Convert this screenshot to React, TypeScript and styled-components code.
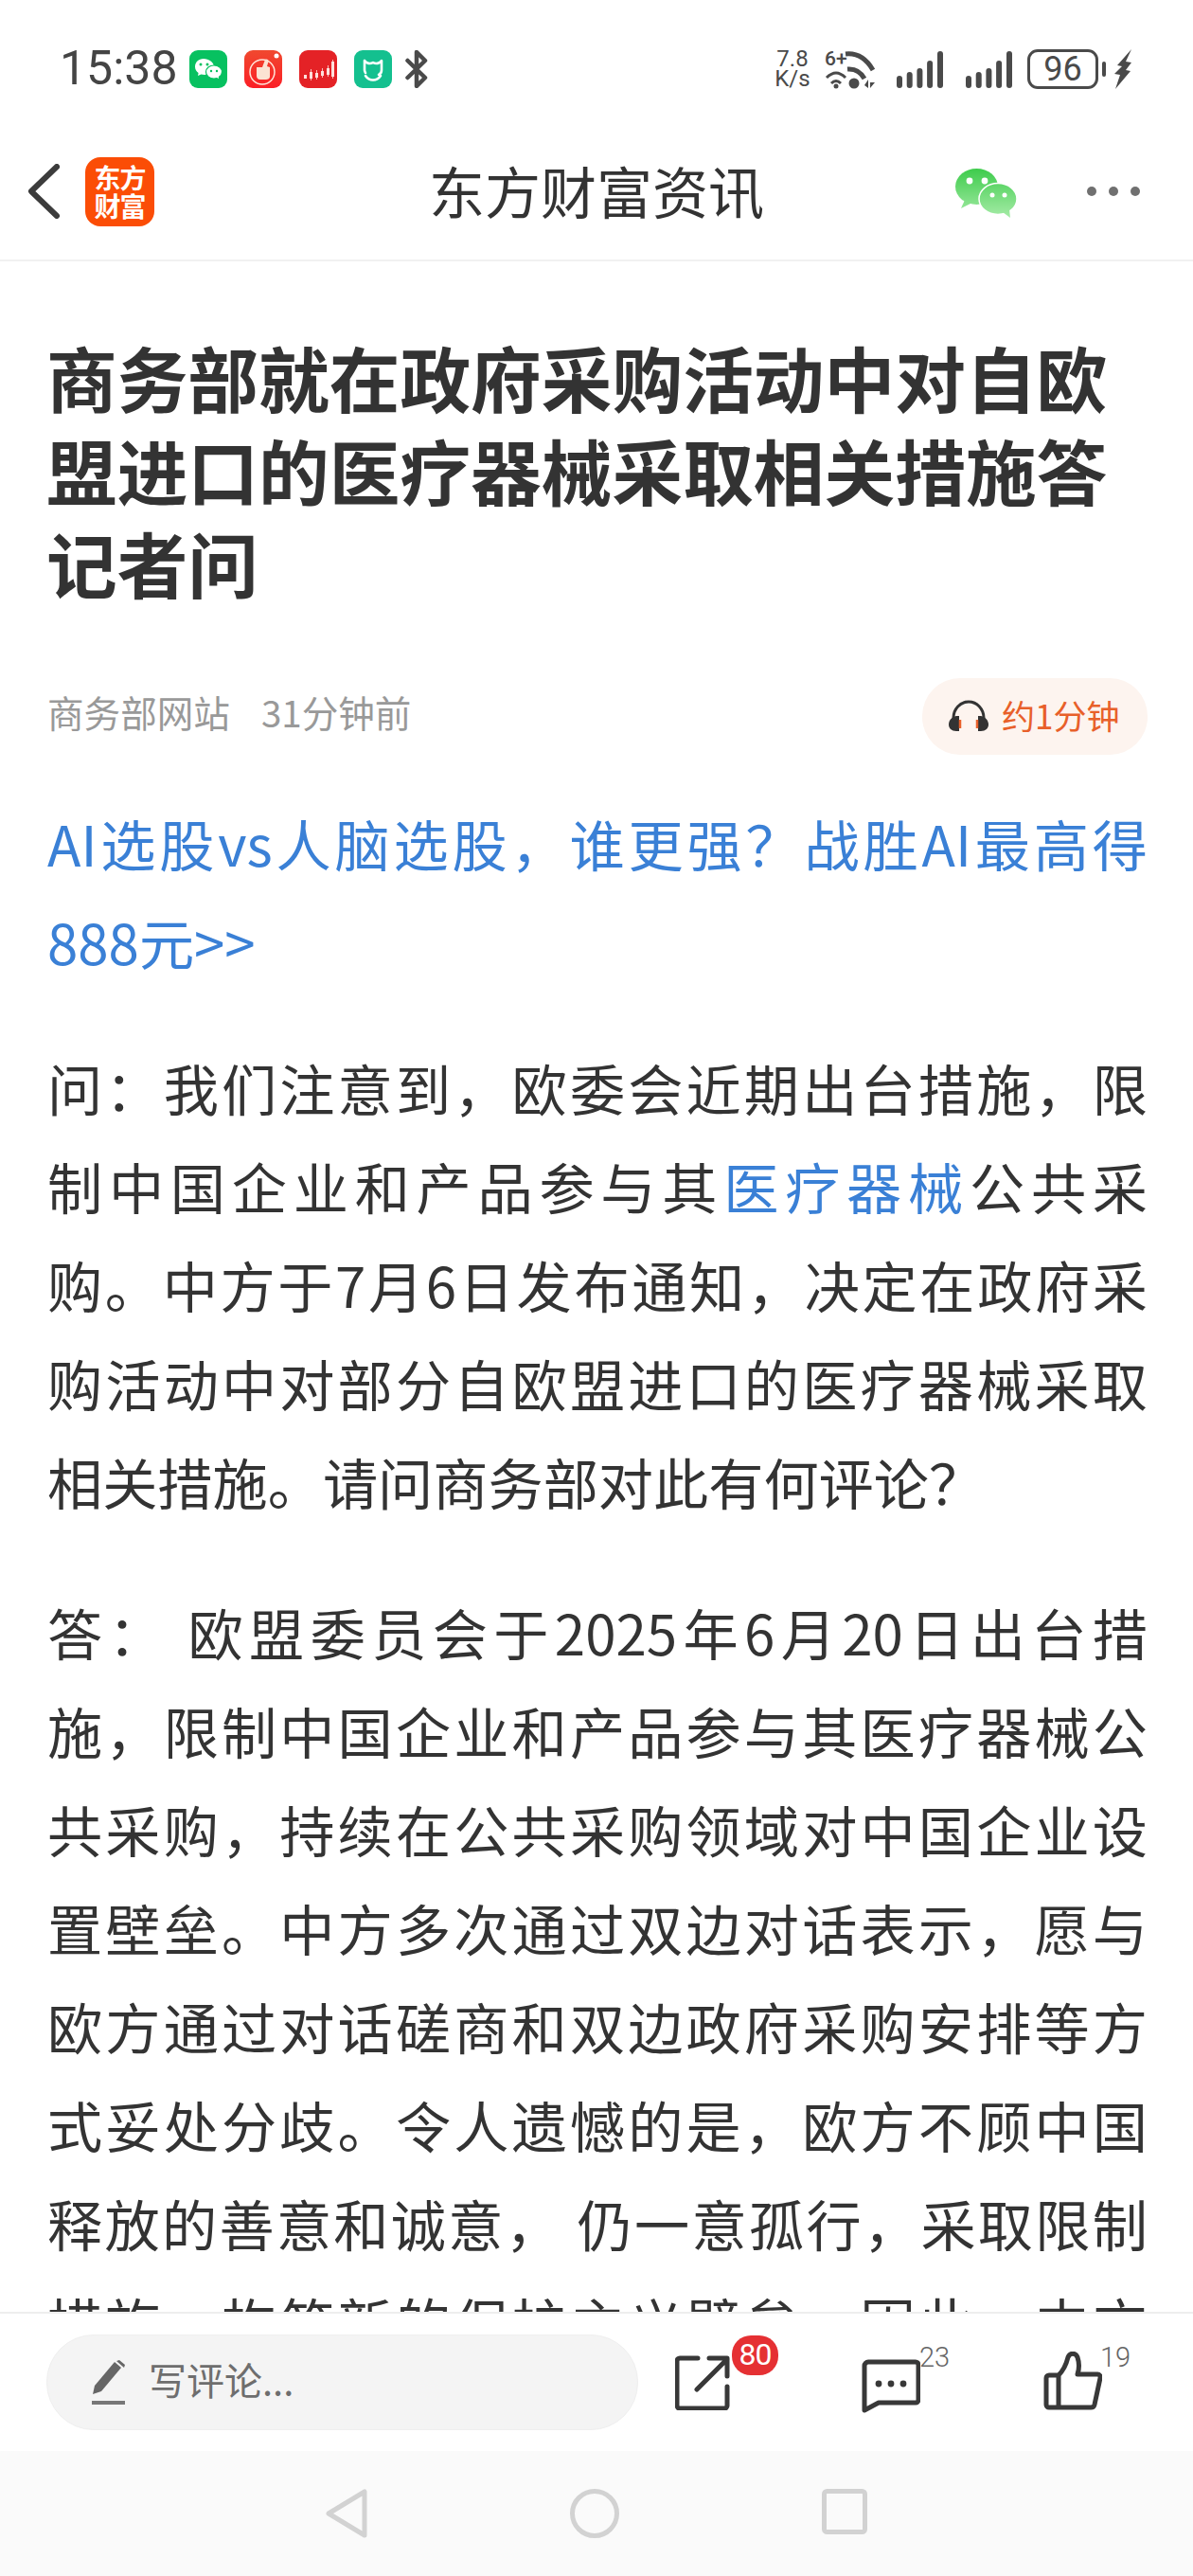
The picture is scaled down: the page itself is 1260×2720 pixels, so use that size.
import styled, { createGlobalStyle } from "styled-components";

const GlobalStyle = createGlobalStyle`
  html, body {
    margin: 0;
    padding: 0;
    background: #fff;
  }
  * {
    box-sizing: border-box;
  }
`;

const Page = styled.div`
  width: 1260px;
  height: 2720px;
  display: flex;
  flex-direction: column;
  overflow: hidden;
  background: #fff;
  font-family: "Noto Sans CJK SC", "Liberation Sans", sans-serif;
`;

const StatusBar = styled.div`
  height: 130px;
  flex: none;
  padding: 52px 64px 0 63px;
  display: flex;
  justify-content: space-between;
  align-items: flex-start;
`;

const StatusGroup = styled.div`
  display: flex;
  align-items: center;
  height: 41px;
`;

const Clock = styled.span`
  font-family: Roboto, "Liberation Sans", sans-serif;
  font-size: 50px;
  line-height: 41px;
  color: #444;
  width: 137px;
`;

const AppTile = styled.div<{ $bg: string; $gap?: number }>`
  width: 40px;
  height: 40px;
  border-radius: 9px;
  background: ${(p) => p.$bg};
  margin-right: ${(p) => p.$gap ?? 18}px;
  overflow: hidden;
  svg {
    display: block;
  }
`;

const NetSpeed = styled.div`
  font-family: Roboto, "Liberation Sans", sans-serif;
  font-size: 24px;
  line-height: 21px;
  width: 40px;
  color: #4a4a4a;
  text-align: center;
  margin-right: 14px;
`;

const WifiIcon = styled.svg`
  margin-right: 20px;
`;

const BarGap = styled.div<{ $width: number }>`
  width: ${(p) => p.$width}px;
`;

const Battery = styled.div`
  width: 75px;
  height: 42px;
  border: 3px solid #4a4a4a;
  border-radius: 11px;
  font-family: Roboto, "Liberation Sans", sans-serif;
  font-size: 36px;
  line-height: 36px;
  text-align: center;
  color: #4a4a4a;
`;

const BatteryNub = styled.div`
  width: 4px;
  height: 16px;
  margin: 0 8px 0 4px;
  border-radius: 2px;
  background: #4a4a4a;
`;

const Header = styled.header`
  height: 146px;
  flex: none;
  display: grid;
  grid-template-columns: 1fr auto 1fr;
  align-items: center;
  border-bottom: 2px solid #f1f1f1;
`;

const HeaderLeft = styled.div`
  display: flex;
  align-items: center;
  padding-left: 29px;
  gap: 27px;
`;

const HeaderRight = styled.div`
  display: flex;
  align-items: center;
  justify-content: flex-end;
  padding-right: 56px;
  gap: 73px;
`;

const WeChatWrap = styled.div`
  display: flex;
  margin-top: 3px;
`;

const AppLogo = styled.div`
  width: 73px;
  height: 73px;
  border-radius: 16px;
  background: #fb4d06;
  color: #fff;
  font-size: 28px;
  font-weight: 700;
  line-height: 30px;
  text-align: center;
  padding-top: 6px;
  letter-spacing: -1px;
`;

const HeaderTitle = styled.h2`
  margin: -2px 0 0;
  font-size: 59px;
  font-weight: 400;
  color: #333;
  line-height: 70px;
`;

const Dots = styled.div`
  display: flex;
  gap: 13px;
`;

const Dot = styled.i`
  width: 10px;
  height: 10px;
  border-radius: 50%;
  background: #707070;
`;

const Article = styled.main`
  flex: 1;
  min-height: 0;
  overflow: hidden;
  padding: 0 48px 0 50px;
`;

const Title = styled.h1`
  margin: 73px 0 0 -1px;
  font-size: 74.7px;
  line-height: 98px;
  font-weight: 700;
  color: #333;
`;

const MetaRow = styled.div`
  margin-top: 73px;
  height: 81px;
  display: flex;
  justify-content: space-between;
  align-items: center;
`;

const Source = styled.div`
  display: flex;
  gap: 33px;
  margin-top: -12px;
  font-size: 38.6px;
  color: #999;
`;

const ListenPill = styled.div`
  height: 81px;
  width: 238px;
  border-radius: 40px;
  background: #fdf4ef;
  color: #e8602a;
  font-size: 35px;
  display: flex;
  align-items: center;
  padding: 0 0 4px 28px;
  gap: 14px;
`;

const Paragraph = styled.p<{ $top: number }>`
  margin: ${(p) => p.$top}px 0 0;
  font-size: 58.2px;
  line-height: 104px;
  color: #333;
  text-align: justify;
`;

const Link = styled.span`
  color: #3a80d6;
`;

const BottomBar = styled.div`
  height: 147px;
  flex: none;
  border-top: 2px solid #eeeeee;
  display: flex;
  align-items: flex-start;
  padding: 22px 0 0 49px;
  background: #fff;
`;

const CommentBox = styled.div`
  width: 625px;
  height: 101px;
  flex: none;
  border-radius: 50px;
  background: #f4f4f4;
  border: 1px solid #efefef;
  display: flex;
  align-items: center;
  padding-left: 47px;
  gap: 24px;
  color: #6e6e6e;
  font-size: 40px;
`;

const CommentHint = styled.span`
  margin-bottom: 8px;
`;

const ActionList = styled.div`
  flex: 1;
  display: flex;
`;

const Action = styled.div<{ $width: number }>`
  position: relative;
  width: ${(p) => p.$width}px;
  height: 101px;
  flex: none;
`;

const ActionIcon = styled.svg<{ $left: number; $top: number }>`
  position: absolute;
  left: ${(p) => p.$left}px;
  top: ${(p) => p.$top}px;
`;

const Badge = styled.span`
  position: absolute;
  left: 99px;
  top: 1px;
  width: 49px;
  height: 42px;
  border-radius: 20px;
  background: #e53033;
  color: #fff;
  font-family: Roboto, "Liberation Sans", sans-serif;
  font-size: 32px;
  letter-spacing: -1px;
  line-height: 41px;
  text-align: center;
`;

const Count = styled.span<{ $left: number }>`
  position: absolute;
  left: ${(p) => p.$left}px;
  top: 7px;
  font-family: Roboto, "Liberation Sans", sans-serif;
  font-weight: 300;
  font-size: 29px;
  line-height: 34px;
  color: #666;
`;

const NavBar = styled.nav`
  height: 132px;
  flex: none;
  background: #fafafa;
  display: flex;
  justify-content: center;
  align-items: flex-start;
  padding-top: 40px;
  gap: 214px;
`;

const Chevron = () => (
  <svg width="34" height="58" viewBox="0 0 34 58">
    <path d="M31 3 4 29l27 26" fill="none" stroke="#3c3c3c" strokeWidth="6" strokeLinecap="round" strokeLinejoin="round" />
  </svg>
);

const WeChatMark = () => (
  <svg width="66" height="54" viewBox="0 0 66 54">
    <defs>
      <linearGradient id="wx" gradientUnits="userSpaceOnUse" x1="0" y1="0" x2="0" y2="54">
        <stop offset="0" stopColor="#3ccb4a" />
        <stop offset="1" stopColor="#a8eca9" />
      </linearGradient>
    </defs>
    <ellipse cx="22.5" cy="20" rx="22.5" ry="19" fill="url(#wx)" />
    <path d="M10 34 6 43l12-6z" fill="url(#wx)" />
    <ellipse cx="45" cy="33" rx="20" ry="16.5" fill="url(#wx)" stroke="#fff" strokeWidth="1.5" />
    <path d="M50 47l8 6-1-9z" fill="url(#wx)" />
    <circle cx="15" cy="14" r="3.4" fill="#fff" />
    <circle cx="31" cy="14" r="3.4" fill="#fff" />
    <circle cx="39" cy="29" r="2.5" fill="#fff" />
    <circle cx="52" cy="29" r="2.5" fill="#fff" />
  </svg>
);

const SignalBars = () => (
  <svg width="49" height="40" viewBox="0 0 49 40">
    {[
      [0, 27],
      [10.7, 23],
      [21.4, 19],
      [32.1, 11],
      [43, 1],
    ].map(([x, y]) => (
      <rect key={x} x={x} y={y} width="6" height={40 - y} rx="3" fill="#4a4a4a" />
    ))}
  </svg>
);

export default function App() {
  return (
    <Page>
      <GlobalStyle />
      <StatusBar>
        <StatusGroup>
          <Clock>15:38</Clock>
          <AppTile $bg="#07c160">
            <svg width="40" height="40" viewBox="0 0 40 40">
              <path d="M15 9C9.5 9 6 13 6 17.5c0 2.700 1.400 5 3.600 6.600L9 27l3.300-1.600c1.200.3 2.500.5 3.700.5 5.500 0 10-3.700 10-8.400S20.500 9 15 9z" fill="#fff" />
              <path d="M26 16c-4.800 0-8.500 3.200-8.500 7s3.700 7 8.500 7c1 0 2-.1 2.900-.4L32 31l-.6-2.800c1.900-1.300 3.100-3.200 3.100-5.200 0-3.800-3.700-7-8.500-7z" fill="#fff" stroke="#07c160" strokeWidth="1.2" />
              <circle cx="12" cy="15" r="1.5" fill="#07c160" />
              <circle cx="19" cy="15" r="1.5" fill="#07c160" />
              <circle cx="23" cy="22" r="1.2" fill="#07c160" />
              <circle cx="29" cy="22" r="1.2" fill="#07c160" />
            </svg>
          </AppTile>
          <AppTile $bg="linear-gradient(180deg,#f0492f,#fb1f26)">
            <svg width="40" height="40" viewBox="0 0 40 40">
              <circle cx="19" cy="23" r="13" fill="none" stroke="#ffe4d8" strokeWidth="1.5" />
              <path d="M13 18h6l3-8c2-1 4 0 3.500 2L24 17l3 1v10c0 2-2 3-4 3h-6c-3 0-4-2-4-4z" fill="#fbe3d3" />
              <circle cx="34" cy="6" r="2.5" fill="#fff" />
            </svg>
          </AppTile>
          <AppTile $bg="#e42226">
            <svg width="40" height="40" viewBox="0 0 40 40">
              <path d="M5 26h3v4H5zM11 23h3v7h-3zM17 24h3v5h-3zM23 22h3v5h-3zM29 19h3v7h-3zM34 12h3v16h-3z" fill="#fde0dc" />
              <path d="M12.5 20v12M18.5 21v10M24.5 19v10M30.5 16v12M35.5 10v20" stroke="#fde0dc" strokeWidth="0.8" />
            </svg>
          </AppTile>
          <AppTile $bg="#14c08f" $gap={14}>
            <svg width="40" height="40" viewBox="0 0 40 40">
              <path d="M11 11c2 3 6 4 9 2 3 2 7 1 9-2v10c0 2-1 4-3 5M11 11v10c0 1 .5 2 1 3" fill="none" stroke="#fff" strokeWidth="2.6" strokeLinejoin="round" strokeLinecap="round" />
              <path d="M12 27c4 6 12 6 16 0" fill="none" stroke="#fff" strokeWidth="2.6" strokeLinecap="round" />
            </svg>
          </AppTile>
          <svg width="24" height="40" viewBox="0 0 24 40">
            <path d="M2.500 11 21 29l-9 9V2l9 9L2.500 29" fill="none" stroke="#4a4a4a" strokeWidth="4.5" strokeLinejoin="round" strokeLinecap="round" />
          </svg>
        </StatusGroup>
        <StatusGroup>
          <NetSpeed>
            7.8
            <br />
            K/s
          </NetSpeed>
          <WifiIcon width="56" height="42" viewBox="0 0 56 42">
            <text x="0" y="17" fontSize="21" fontWeight="500" fontFamily="Roboto, sans-serif" fill="#4a4a4a">6+</text>
            <path d="M22 5Q40 3 51 22M24 21Q36 20 42 31" fill="none" stroke="#4a4a4a" strokeWidth="5" />
            <path d="M2 30Q12 20 22 30M7 36Q12 31 17 36" fill="none" stroke="#4a4a4a" strokeWidth="3" />
            <circle cx="12" cy="39" r="2.5" fill="#4a4a4a" />
            <circle cx="31" cy="36" r="5.5" fill="#4a4a4a" />
            <path d="M42 38l4-6v9zM48 31v10l5-6h-5z" fill="#4a4a4a" />
          </WifiIcon>
          <SignalBars />
          <BarGap $width={24} />
          <SignalBars />
          <BarGap $width={16} />
          <Battery>96</Battery>
          <BatteryNub />
          <svg width="20" height="42" viewBox="0 0 20 42">
            <path d="M19 0 4 17l5 1-8 8 6 1-5 15 16-19-5-1 6-8-6-1z" fill="#4a4a4a" />
          </svg>
        </StatusGroup>
      </StatusBar>
      <Header>
        <HeaderLeft>
          <Chevron />
          <AppLogo>
            东方
            <br />
            财富
          </AppLogo>
        </HeaderLeft>
        <HeaderTitle>东方财富资讯</HeaderTitle>
        <HeaderRight>
          <WeChatWrap>
            <WeChatMark />
          </WeChatWrap>
          <Dots>
            <Dot />
            <Dot />
            <Dot />
          </Dots>
        </HeaderRight>
      </Header>
      <Article>
        <Title>商务部就在政府采购活动中对自欧盟进口的医疗器械采取相关措施答记者问</Title>
        <MetaRow>
          <Source>
            <span>商务部网站</span>
            <span>31分钟前</span>
          </Source>
          <ListenPill>
            <svg width="42" height="34" viewBox="0 0 42 34">
              <path d="M5 24V20a16 17 0 0 1 32 0v4" fill="none" stroke="#333" strokeWidth="3" />
              <path d="M11 18v16H8c-5 0-8-3-8-7s3-8 8-9zM31 18v16h3c5 0 8-3 8-7s-3-8-8-9z" fill="#333" />
              <path d="M12 22v9M30 22v9" stroke="#e8602a" strokeWidth="2.5" />
            </svg>
            约1分钟
          </ListenPill>
        </MetaRow>
        <Paragraph $top={41}>
          <Link>AI选股vs人脑选股，谁更强？战胜AI最高得888元&gt;&gt;</Link>
        </Paragraph>
        <Paragraph $top={50}>
          问：我们注意到，欧委会近期出台措施，限制中国企业和产品参与其<Link>医疗器械</Link>公共采购。中方于7月6日发布通知，决定在政府采购活动中对部分自欧盟进口的医疗器械采取相关措施。请问商务部对此有何评论？
        </Paragraph>
        <Paragraph $top={55}>
          答： 欧盟委员会于2025年6月20日出台措施，限制中国企业和产品参与其医疗器械公共采购，持续在公共采购领域对中国企业设置壁垒。中方多次通过双边对话表示，愿与欧方通过对话磋商和双边政府采购安排等方式妥处分歧。令人遗憾的是，欧方不顾中国释放的善意和诚意， 仍一意孤行，采取限制措施，构筑新的保护主义壁垒。因此，中方不得不采取相应措施。
        </Paragraph>
      </Article>
      <BottomBar>
        <CommentBox>
          <svg width="36" height="48" viewBox="0 0 36 48">
            <path d="M1 36 3 27 24 2l7 6L10 33z" fill="#666" />
            <path d="M26 1l3-1 6 5-1 3z" fill="#666" />
            <rect x="0" y="43" width="35" height="4" fill="#777" />
          </svg>
          <CommentHint>写评论...</CommentHint>
        </CommentBox>
        <ActionList>
          <Action $width={207}>
            <ActionIcon $left={39} $top={22} width="58" height="58" viewBox="0 0 58 58">
              <path d="M24 3H5a3 3 0 0 0-3 3v47a3 3 0 0 0 3 3h47a3 3 0 0 0 3-3V33M23 36 55 4M36 3h19v19" fill="none" stroke="#383838" strokeWidth="5" strokeLinecap="round" strokeLinejoin="round" />
            </ActionIcon>
            <Badge>80</Badge>
          </Action>
          <Action $width={191}>
            <ActionIcon $left={29} $top={25} width="62" height="58" viewBox="0 0 62 58">
              <path d="M3 55V8a4 4 0 0 1 4-4h50a3 3 0 0 1 3 3v37a3 3 0 0 1-3 3H18z" fill="none" stroke="#383838" strokeWidth="5" strokeLinejoin="round" />
              <circle cx="18" cy="27" r="3.4" fill="#383838" />
              <circle cx="31" cy="27" r="3.4" fill="#383838" />
              <circle cx="44" cy="27" r="3.4" fill="#383838" />
            </ActionIcon>
            <Count $left={90}>23</Count>
          </Action>
          <Action $width={170}>
            <ActionIcon $left={30} $top={18} width="62" height="62" viewBox="0 0 62 62">
              <path d="M16 25 H6a3 3 0 0 0-3 3v28a3 3 0 0 0 3 3h44a4 4 0 0 0 4-3l6-28a3 3 0 0 0-3-4H36c2-6 2-12 0-18-2-5-8-5-10 0-2 8-5 14-10 19zM16 25v34" fill="none" stroke="#383838" strokeWidth="5" strokeLinejoin="round" />
            </ActionIcon>
            <Count $left={90}>19</Count>
          </Action>
        </ActionList>
      </BottomBar>
      <NavBar>
        <svg width="44" height="52" viewBox="0 0 44 52">
          <path d="M41 3v46L3 26z" fill="none" stroke="#d2d2d2" strokeWidth="5" strokeLinejoin="round" />
        </svg>
        <svg width="52" height="52" viewBox="0 0 52 52">
          <circle cx="26" cy="26" r="23.5" fill="none" stroke="#d2d2d2" strokeWidth="5" />
        </svg>
        <svg width="48" height="48" viewBox="0 0 48 48">
          <rect x="2.5" y="2.5" width="43" height="43" rx="3" fill="none" stroke="#d2d2d2" strokeWidth="5" />
        </svg>
      </NavBar>
    </Page>
  );
}
